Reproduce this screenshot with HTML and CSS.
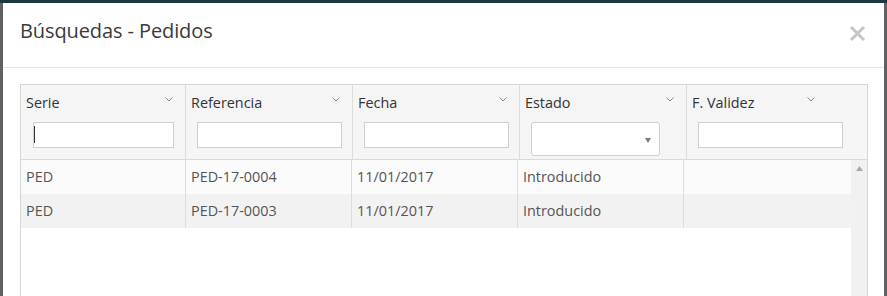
FILE: index.html
```html
<!DOCTYPE html>
<html lang="es">
<head>
<meta charset="utf-8">
<title>Búsquedas - Pedidos</title>
<link rel="stylesheet" href="styles.css">
</head>
<body>
<div class="modal">
  <div class="modal-header">
    <h4 class="modal-title">Búsquedas - Pedidos</h4>
    <button class="close" type="button" aria-label="Cerrar">
      <svg width="17" height="17" viewBox="0 0 17 17"><path d="M2 2L15 15M15 2L2 15" stroke="#c6c6c6" stroke-width="3" fill="none"/></svg>
    </button>
  </div>
  <div class="modal-body">
    <div class="grid">
      <div class="grid-head">
        <div class="hcell">
          <div class="hlabel"><span>Serie</span><svg class="chev" width="8" height="5" viewBox="0 0 8 5"><path d="M0.5 0.5L4 4L7.5 0.5" stroke="#8a8a8a" fill="none"/></svg></div>
          <div class="hfilter"><div class="input input-narrow"><span class="caret"></span></div></div>
        </div>
        <div class="hcell">
          <div class="hlabel"><span>Referencia</span><svg class="chev" width="8" height="5" viewBox="0 0 8 5"><path d="M0.5 0.5L4 4L7.5 0.5" stroke="#8a8a8a" fill="none"/></svg></div>
          <div class="hfilter"><div class="input"></div></div>
        </div>
        <div class="hcell">
          <div class="hlabel"><span>Fecha</span><svg class="chev" width="8" height="5" viewBox="0 0 8 5"><path d="M0.5 0.5L4 4L7.5 0.5" stroke="#8a8a8a" fill="none"/></svg></div>
          <div class="hfilter"><div class="input"></div></div>
        </div>
        <div class="hcell">
          <div class="hlabel"><span>Estado</span><svg class="chev" width="8" height="5" viewBox="0 0 8 5"><path d="M0.5 0.5L4 4L7.5 0.5" stroke="#8a8a8a" fill="none"/></svg></div>
          <div class="hfilter"><div class="select"><svg width="6" height="5" viewBox="0 0 6 5"><path d="M0 0H6L3 5Z" fill="#7a7a7a"/></svg></div></div>
        </div>
        <div class="hcell hcell-last">
          <div class="hlabel hlabel-last"><span>F. Validez</span><svg class="chev" width="8" height="5" viewBox="0 0 8 5"><path d="M0.5 0.5L4 4L7.5 0.5" stroke="#8a8a8a" fill="none"/></svg></div>
          <div class="hfilter"><div class="input"></div></div>
        </div>
      </div>
      <div class="grid-body">
        <div class="rows">
          <div class="row row-odd">
            <div class="cell">PED</div>
            <div class="cell">PED-17-0004</div>
            <div class="cell">11/01/2017</div>
            <div class="cell">Introducido</div>
            <div class="cell cell-last"></div>
          </div>
          <div class="row row-even">
            <div class="cell">PED</div>
            <div class="cell">PED-17-0003</div>
            <div class="cell">11/01/2017</div>
            <div class="cell">Introducido</div>
            <div class="cell cell-last"></div>
          </div>
        </div>
        <div class="vscroll">
          <svg width="7" height="5" viewBox="0 0 7 5"><path d="M0 5H7L3.5 0Z" fill="#a8a8a8"/></svg>
        </div>
      </div>
    </div>
  </div>
</div>
</body>
</html>
```
FILE: styles.css
```css
html, body {
  margin: 0;
  padding: 0;
}

body {
  height: 296px;
  overflow: hidden;
  background: linear-gradient(#1d3743 0 3px, #5f6163 3px);
  font-family: "Open Sans", "Noto Sans", sans-serif;
}

.modal {
  margin: 3px 0 0 3px;
  width: 881px;
  height: 293px;
  background: #fff;
  overflow: hidden;
}

.modal-header {
  display: flex;
  justify-content: space-between;
  align-items: flex-start;
  padding: 14px 18px 22px 17px;
  border-bottom: 1px solid #e5e5e5;
}

.modal-title {
  margin: 0;
  font-size: 20px;
  font-weight: 400;
  line-height: 28px;
  color: #3a3a3a;
  letter-spacing: -0.1px;
}

.close {
  margin-top: 8px;
  padding: 0;
  border: 0;
  background: none;
  width: 17px;
  height: 17px;
  display: block;
}

.close svg {
  display: block;
}

.modal-body {
  padding: 16px 16px 0 17px;
}

.grid {
  border: 1px solid #d6d6d6;
  border-bottom: 0;
}

.grid-head {
  display: grid;
  grid-template-columns: 165px 167px 167px 167px 1fr;
  background: #f5f5f5;
  border-bottom: 1px solid #d9d9d9;
}

.hcell {
  height: 74px;
  border-right: 1px solid #dcdcdc;
}

.hcell-last {
  border-right: 0;
}

.hlabel {
  display: flex;
  justify-content: space-between;
  align-items: center;
  height: 34px;
  padding: 0 12px 0 5px;
  font-size: 14.4px;
  color: #333;
}

.hlabel-last {
  padding-right: 52px;
}

.chev {
  display: block;
  margin-top: -5px;
}

.hfilter {
  padding: 3px 0 0 11px;
}

.input {
  box-sizing: border-box;
  width: 145px;
  height: 26px;
  border: 1px solid #cfcfcf;
  background: #fff;
  display: flex;
  align-items: flex-start;
}

.input-narrow {
  width: 141px;
  margin-left: 1px;
}

.caret {
  display: block;
  width: 1px;
  height: 17px;
  margin-top: 3px;
  background: #333;
}

.select {
  box-sizing: border-box;
  width: 129px;
  height: 34px;
  border: 1px solid #cfcfcf;
  border-radius: 3px;
  background: #fff;
  display: flex;
  justify-content: flex-end;
  align-items: center;
  padding: 2px 8px 0 0;
}

.select svg {
  display: block;
}

.grid-body {
  display: flex;
  height: 200px;
}

.rows {
  flex: 1;
}

.row {
  display: grid;
  grid-template-columns: 165px 166px 166px 166px 1fr;
  height: 34px;
}

.row-odd {
  background: #fbfbfb;
}

.row-even {
  background: #f2f2f2;
}

.cell {
  border-right: 1px solid #dcdcdc;
  padding-left: 5px;
  font-size: 14.4px;
  line-height: 34px;
  color: #555;
  white-space: nowrap;
}

.cell-last {
  border-right: 0;
}

.vscroll {
  width: 16px;
  background: #f1f1f1;
  display: flex;
  justify-content: center;
  align-items: flex-start;
  padding-top: 6px;
  box-sizing: border-box;
}

.vscroll svg {
  display: block;
}
```
